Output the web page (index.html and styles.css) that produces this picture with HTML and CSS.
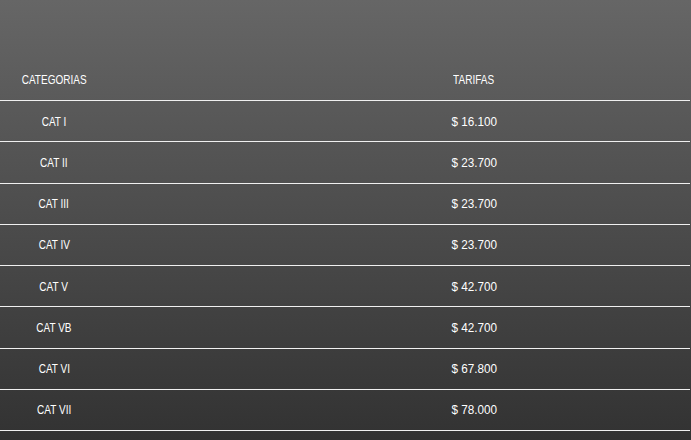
FILE: index.html
```html
<!DOCTYPE html>
<html lang="es">
<head>
<meta charset="utf-8">
<title>Tarifas</title>
<link rel="stylesheet" href="styles.css">
</head>
<body>
<div class="page">
  <div class="table">
    <div class="row head">
      <div class="cell cat"><span class="t">CATEGORIAS</span></div>
      <div class="cell tar"><span class="t">TARIFAS</span></div>
    </div>
    <div class="row"><div class="cell cat"><span class="t">CAT I</span></div><div class="cell tar"><span class="t num">$ 16.100</span></div></div>
    <div class="row"><div class="cell cat"><span class="t">CAT II</span></div><div class="cell tar"><span class="t num">$ 23.700</span></div></div>
    <div class="row"><div class="cell cat"><span class="t">CAT III</span></div><div class="cell tar"><span class="t num">$ 23.700</span></div></div>
    <div class="row"><div class="cell cat"><span class="t">CAT IV</span></div><div class="cell tar"><span class="t num">$ 23.700</span></div></div>
    <div class="row"><div class="cell cat"><span class="t">CAT V</span></div><div class="cell tar"><span class="t num">$ 42.700</span></div></div>
    <div class="row"><div class="cell cat"><span class="t">CAT VB</span></div><div class="cell tar"><span class="t num">$ 42.700</span></div></div>
    <div class="row"><div class="cell cat"><span class="t">CAT VI</span></div><div class="cell tar"><span class="t num">$ 67.800</span></div></div>
    <div class="row"><div class="cell cat"><span class="t">CAT VII</span></div><div class="cell tar"><span class="t num">$ 78.000</span></div></div>
  </div>
</div>
</body>
</html>
```
FILE: styles.css
```css
html, body {
  margin: 0;
  padding: 0;
}
body {
  width: 691px;
  height: 440px;
  overflow: hidden;
  background: linear-gradient(to bottom, #666666 0px, #323232 440px);
  font-family: "Liberation Sans", Arial, sans-serif;
  font-size: 13px;
  color: #ffffff;
}
.page {
  padding-top: 59px;
}
.table {
  width: 690px;
  display: flex;
  flex-direction: column;
}
.row {
  display: grid;
  grid-template-columns: 108px 1fr;
  align-items: center;
  height: 40.25px;
  border-bottom: 1px solid #f0f0f0;
}
.row.head {
  height: 41px;
}
.cell {
  text-align: center;
}
.t {
  display: inline-block;
  transform: scaleX(0.77);
}
.t.num {
  transform: scaleX(0.9);
}
.tar {
  padding-left: 150px;
}
```
